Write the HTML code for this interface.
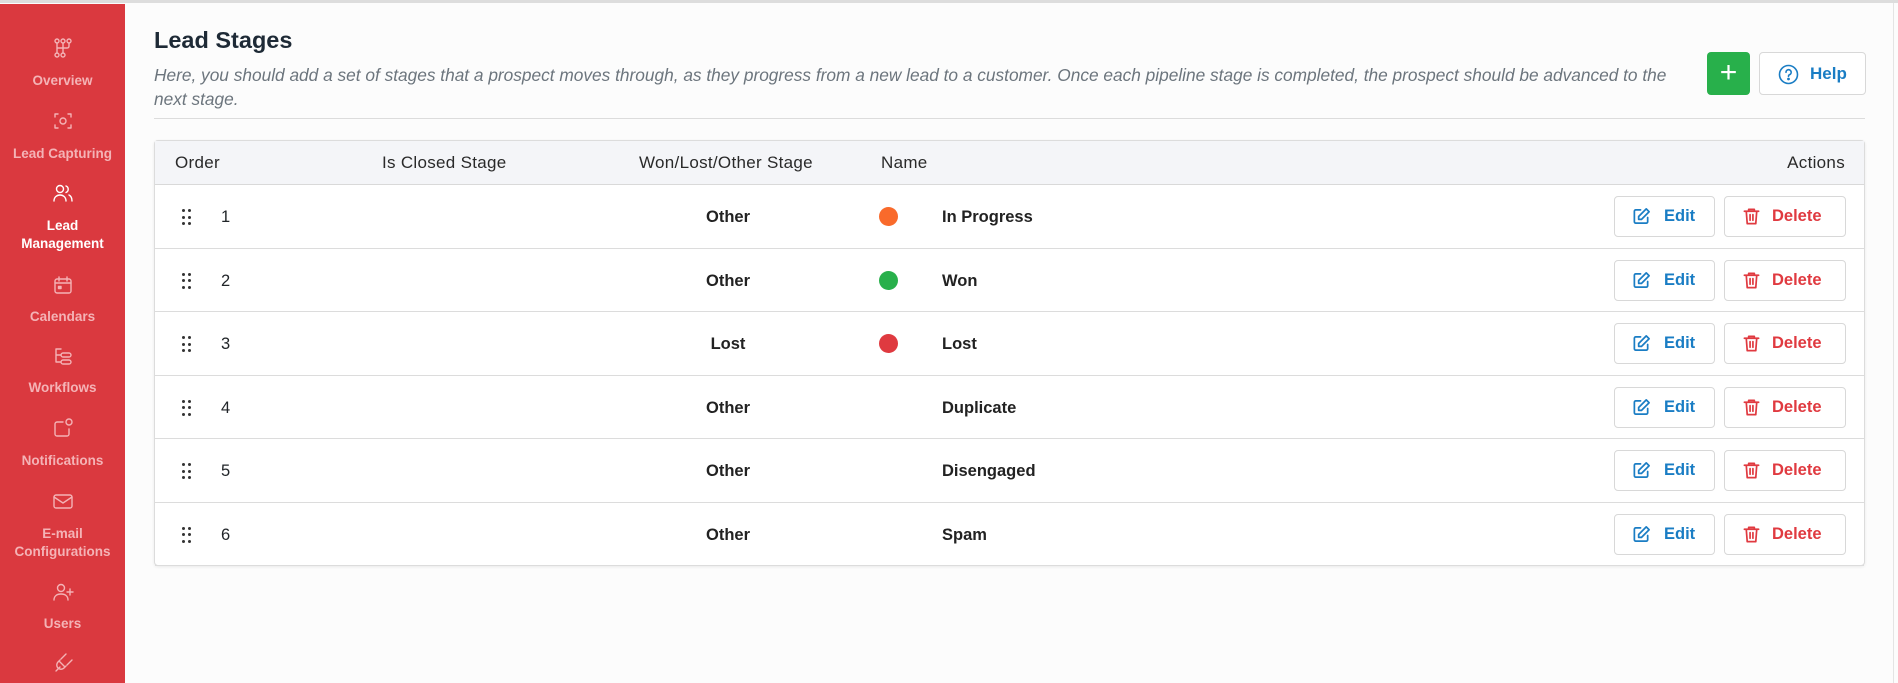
<!DOCTYPE html>
<html><head><meta charset="utf-8"><style>
*{box-sizing:border-box;margin:0;padding:0}
body{width:1898px;height:683px;overflow:hidden;background:#fcfcfc;font-family:"Liberation Sans",sans-serif;color:#212529;position:relative}
.top{position:absolute;left:0;top:0;width:1898px;height:3px;background:#ddd}
.sb{position:absolute;left:0;top:4px;width:125px;height:679px;background:#da393f}
.it{position:absolute;left:0;width:125px;text-align:center;color:#f4b3b6;font-size:13.5px;font-weight:bold;line-height:18px}
.it.a{color:#fff}
.ic{position:absolute;left:52px;width:22px;height:22px}
.ic svg{width:22px;height:22px;fill:none;stroke:#f4b3b6;stroke-width:1.4;stroke-linecap:round;stroke-linejoin:round}
.ic.a svg{stroke:#fff}
h1{position:absolute;left:154px;top:27px;font-size:23.5px;font-weight:bold;color:#1e2a36}
.sub{position:absolute;left:154px;top:63px;width:1560px;font-size:17.3px;font-style:italic;color:#6c757d;line-height:24px;white-space:nowrap}
.hr{position:absolute;left:154px;top:118px;width:1711px;height:1px;background:#dcdcdc}
.plus{position:absolute;left:1707px;top:52px;width:43px;height:43px;background:#28b04b;border-radius:4px;color:#fff;font-size:30px;text-align:center;line-height:41px;font-weight:300}
.help{position:absolute;left:1759px;top:52px;width:107px;height:43px;border:1px solid #d8d8d8;border-radius:4px;background:#fff;color:#1a7dc4;font-size:17px;font-weight:bold;line-height:41px;padding-left:50px}
.help svg{position:absolute;left:18px;top:11px}
.tbl{position:absolute;left:154px;top:140px;width:1711px;height:426px;border:1px solid #dcdcdc;border-radius:4px;background:#fff;box-shadow:0 1px 3px rgba(0,0,0,.08)}
.hd{position:absolute;left:0;top:0;width:100%;height:44px;background:#f4f5f8;border-bottom:1px solid #d9d9d9;font-size:17px;letter-spacing:.3px;color:#2a2a2a}
.hd span{position:absolute;top:12px}
.row{position:absolute;left:0;width:100%;height:63.5px;border-bottom:1px solid #dcdcdc;font-size:16.5px}
.row span{position:absolute;top:23px}
.b{font-weight:bold;color:#222}
.dots{position:absolute;left:27px;top:24px;width:10px;height:17px}
.dots i{position:absolute;width:3.2px;height:3.2px;border-radius:50%;background:#333}
.dot{position:absolute;left:724px;top:22px;width:19px;height:19px;border-radius:50%}
.btn{position:absolute;top:11px;height:41px;border:1px solid #d8d8d8;border-radius:4px;font-size:16.5px;font-weight:bold;line-height:39px}
.ed{left:1459px;width:101px;color:#1a7dc4;padding-left:49px}
.de{left:1569px;width:122px;color:#e03a40;padding-left:47px}
.btn svg{position:absolute;left:17px;top:10px;width:19px;height:19px;fill:none;stroke-width:1.8;stroke-linecap:round;stroke-linejoin:round}
.ed svg{stroke:#1a7dc4}.de svg{stroke:#e03a40}
.scr{position:absolute;left:1893px;top:3px;width:1px;height:680px;background:#e4e4e4}
</style></head><body>
<div class="top"></div>
<div class="sb">
 <div class="ic" style="top:33px"><svg viewBox="0 0 22 22"><circle cx="5" cy="4" r="2"/><circle cx="11" cy="4" r="2"/><circle cx="17" cy="4" r="2"/><circle cx="5" cy="18" r="2"/><circle cx="11" cy="18" r="2"/><path d="M5 6v10M11 6v10M17 6v3q0 2-2 2H5"/></svg></div>
 <div class="it" style="top:68px">Overview</div>
 <div class="ic" style="top:106px"><svg viewBox="0 0 22 22"><path d="M3 7V4h3M16 4h3v3M19 15v3h-3M6 18H3v-3"/><circle cx="11" cy="11" r="3"/></svg></div>
 <div class="it" style="top:141px">Lead Capturing</div>
 <div class="ic a" style="top:178px"><svg viewBox="0 0 22 22"><circle cx="8" cy="7" r="3.5"/><path d="M2 19c0-4 3-6 6-6s6 2 6 6M14 4a3.5 3.5 0 0 1 0 6.5M17 13c2 1 3 3 3 6"/></svg></div>
 <div class="it a" style="top:213px">Lead<br>Management</div>
 <div class="ic" style="top:270px"><svg viewBox="0 0 22 22"><rect x="3" y="5" width="16" height="14" rx="2"/><path d="M3 9h16M7 3v4M15 3v4"/><rect x="6.5" y="12.5" width="2.5" height="2" fill="#f4b3b6"/></svg></div>
 <div class="it" style="top:304px">Calendars</div>
 <div class="ic" style="top:342px"><svg viewBox="0 0 22 22"><path d="M4 3v13h5M4 9h5M4 3h5"/><rect x="9" y="7" width="10" height="4" rx="2"/><rect x="9" y="14" width="10" height="4" rx="2"/></svg></div>
 <div class="it" style="top:375px">Workflows</div>
 <div class="ic" style="top:413px"><svg viewBox="0 0 22 22"><path d="M11 5H5a2 2 0 0 0-2 2v10a2 2 0 0 0 2 2h10a2 2 0 0 0 2-2v-5"/><circle cx="17" cy="5" r="3"/></svg></div>
 <div class="it" style="top:448px">Notifications</div>
 <div class="ic" style="top:486px"><svg viewBox="0 0 22 22"><rect x="2" y="5" width="18" height="13" rx="2"/><path d="M2 7l9 6 9-6"/></svg></div>
 <div class="it" style="top:521px">E-mail<br>Configurations</div>
 <div class="ic" style="top:577px"><svg viewBox="0 0 22 22"><circle cx="9" cy="7" r="3.5"/><path d="M2 19c0-4 3-6 7-6s7 2 7 6M18 8v6M15 11h6"/></svg></div>
 <div class="it" style="top:611px">Users</div>
 <div class="ic" style="top:648px"><svg viewBox="0 0 22 22"><path d="M4 19l4-4M7 9l6 6M9 7l5-5M15 13l5-5M8 8l-2 2a4 4 0 0 0 6 6l2-2"/></svg></div>
</div>
<h1>Lead Stages</h1>
<div class="sub">Here, you should add a set of stages that a prospect moves through, as they progress from a new lead to a customer. Once each pipeline stage is completed, the prospect should be advanced to the<br>next stage.</div>
<div class="hr"></div>
<div class="plus">+</div>
<div class="help"><svg width="21" height="21" viewBox="0 0 21 21" fill="none" stroke="#1a7dc4" stroke-width="1.6" stroke-linecap="round"><circle cx="10.5" cy="10.5" r="9"/><path d="M8 8.3a2.6 2.6 0 1 1 3.5 2.4c-.7.3-1 .8-1 1.6"/><circle cx="10.5" cy="15" r=".6" fill="#1a7dc4"/></svg>Help</div>
<div class="tbl">
 <div class="hd"><span style="left:20px">Order</span><span style="left:227px">Is Closed Stage</span><span style="left:484px">Won/Lost/Other Stage</span><span style="left:726px">Name</span><span style="right:19px">Actions</span></div>
 <div id="rows"></div>
</div>
<div class="scr"></div>
<script>
var d=[["1","Other","#f96a2b","In Progress"],["2","Other","#28b04b","Won"],["3","Lost","#df3a40","Lost"],["4","Other","","Duplicate"],["5","Other","","Disengaged"],["6","Other","","Spam"]];
var h="";
d.forEach(function(r,i){
 h+='<div class="row" style="top:'+(44+i*63.5)+'px"><div class="dots">';
 [0,6.5,13].forEach(function(y){[0,6].forEach(function(x){h+='<i style="left:'+x+'px;top:'+y+'px"></i>'})});
 h+='</div><span style="left:66px">'+r[0]+'</span><span class="b" style="left:427px;width:292px;text-align:center">'+r[1]+'</span>';
 if(r[2])h+='<div class="dot" style="background:'+r[2]+'"></div>';
 h+='<span class="b" style="left:787px">'+r[3]+'</span>';
 h+='<div class="btn ed"><svg viewBox="0 0 20 20"><path d="M9 3H4a1.5 1.5 0 0 0-1.5 1.5v11A1.5 1.5 0 0 0 4 17h11a1.5 1.5 0 0 0 1.5-1.5V11"/><path d="M15 2l3 3-8 8H7v-3z"/></svg>Edit</div>';
 h+='<div class="btn de"><svg viewBox="0 0 20 20"><path d="M2.5 4.5h15M7 4.5V2.5h6v2M4.5 4.5l1 13h9l1-13M8.5 8v6M11.5 8v6"/></svg>Delete</div></div>';
});
document.getElementById("rows").innerHTML=h;
</script>
</body></html>
